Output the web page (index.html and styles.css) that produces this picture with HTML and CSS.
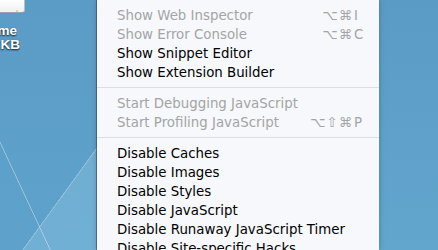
FILE: index.html
```html
<!DOCTYPE html>
<html lang="en">
<head>
  <meta charset="UTF-8">
  <title>Develop menu</title>
  <link rel="stylesheet" href="styles.css">
</head>
<body>
  <div class="desktop">
    <div class="icons">
      <div class="drive"><span class="led"></span></div>
      <div class="name first"><span>Home</span></div>
      <div class="name"><span>Zero KB</span></div>
    </div>

    <ul class="menu">
      <li class="item off"><span class="text">Show Web Inspector</span><span class="mods">⌥⌘</span><span class="key">I</span></li>
      <li class="item off"><span class="text">Show Error Console</span><span class="mods">⌥⌘</span><span class="key">C</span></li>
      <li class="item"><span class="text">Show Snippet Editor</span></li>
      <li class="item"><span class="text">Show Extension Builder</span></li>
      <li class="sep"></li>
      <li class="item off"><span class="text">Start Debugging JavaScript</span></li>
      <li class="item off"><span class="text">Start Profiling JavaScript</span><span class="mods">⌥⇧⌘</span><span class="key">P</span></li>
      <li class="sep"></li>
      <li class="item"><span class="text">Disable Caches</span></li>
      <li class="item"><span class="text">Disable Images</span></li>
      <li class="item"><span class="text">Disable Styles</span></li>
      <li class="item"><span class="text">Disable JavaScript</span></li>
      <li class="item"><span class="text">Disable Runaway JavaScript Timer</span></li>
      <li class="item"><span class="text">Disable Site-specific Hacks</span></li>
    </ul>

    <div class="rest"></div>
  </div>
</body>
</html>
```

FILE: styles.css
```css
body, html {
  margin: 0;
  height: 100%;
}

body {
  width: 438px;
  height: 250px;
  overflow: hidden;
  font-family: "DejaVu Sans", "Noto Sans", sans-serif;
  background: linear-gradient(#5a9bc6, #62a5cd);
}

.desktop {
  display: flex;
  height: 250px;
}

/* left strip of wallpaper with the two light streaks */
.icons {
  width: 97px;
  flex: none;
  display: flex;
  flex-direction: column;
  background:
    linear-gradient(65deg, transparent 23.2%, rgba(255, 255, 255, 0.35) 23.4%, rgba(255, 255, 255, 0.35) 23.7%, transparent 23.9%),
    linear-gradient(126deg, transparent 73.1%, rgba(255, 255, 255, 0.4) 73.3%, rgba(190, 230, 245, 0.2) 73.8%, rgba(170, 225, 245, 0.22) 100%),
    linear-gradient(#5b9cc6, #5ea2cb);
}

.drive {
  width: 24px;
  height: 12px;
  background: linear-gradient(#ffffff, #eef0f2);
  border-bottom: 1px solid #9aa3ab;
  border-right: 1px solid #b9c0c6;
  border-radius: 0 0 3px 0;
  position: relative;
}

.led {
  position: absolute;
  left: 16px;
  top: 10px;
  width: 2px;
  height: 2px;
  border-radius: 1px;
  background: #d8d070;
}

.name {
  width: 20px;
  display: flex;
  justify-content: flex-end;
  overflow: hidden;
  white-space: nowrap;
  font-family: "Liberation Sans", sans-serif;
  font-weight: bold;
  font-size: 13.5px;
  line-height: 14px;
  color: #fff;
  text-shadow: 0 1px 2px rgba(0, 0, 0, 0.9);
}

.name.first {
  width: 17px;
  margin-top: 11px;
}

.menu {
  width: 282px;
  flex: none;
  margin: 0;
  padding: 6px 0 0;
  list-style: none;
  background: #f6f8fb;
  box-shadow: -1px 0 0 rgba(40, 70, 100, 0.55), 0 0 5px rgba(0, 0, 0, 0.25);
}

.item {
  display: flex;
  height: 19px;
  line-height: 19px;
  padding: 0 11px 0 20px;
  font-size: 13.35px;
  color: #000;
  white-space: nowrap;
}

.item.off {
  color: #a4a4a4;
}

.text {
  flex: 1;
}

.mods {
  text-align: right;
  letter-spacing: 1px;
}

.key {
  width: 14px;
  padding-left: 1px;
}

.sep {
  height: 1px;
  margin: 5px 0 6px;
  background: #dcdfe2;
}

.rest {
  flex: 1;
}
```
